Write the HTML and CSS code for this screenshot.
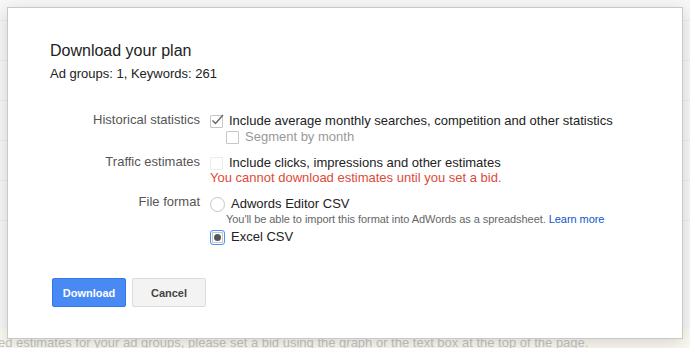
FILE: index.html
```html
<!DOCTYPE html>
<html lang="en">
  <head>
    <meta charset="UTF-8" />
    <title>Download your plan</title>
    <link rel="stylesheet" href="styles.css">
  </head>
  <body>
    <div class="page">
      <div class="page-row"></div>
      <div class="page-row"></div>
      <div class="page-row"></div>
      <div class="page-row"></div>
      <div class="page-row"></div>
      <div class="page-row"></div>
      <div class="page-note">To see detailed estimates for your ad groups, please set a bid using the graph or the text box at the top of the page.</div>
    </div>

    <div class="dialog">
      <h2 class="title">Download your plan</h2>
      <p class="summary">Ad groups: 1, Keywords: 261</p>

      <div class="form">
        <div class="label">Historical statistics</div>
        <div class="options">
          <div class="option">
            <span class="check checked">
              <svg width="15" height="15" viewBox="0 0 15 15"><polyline points="2.5,7.5 5.5,10.5 13,2" fill="none" stroke="#666" stroke-width="1.4" /></svg>
            </span>
            Include average monthly searches, competition and other statistics
          </div>
          <div class="option sub disabled">
            <span class="check"></span>
            Segment by month
          </div>
        </div>

        <div class="label">Traffic estimates</div>
        <div class="options">
          <div class="option">
            <span class="check off"></span>
            Include clicks, impressions and other estimates
          </div>
          <div class="error">You cannot download estimates until you set a bid.</div>
        </div>

        <div class="label label-file">File format</div>
        <div class="options options-file">
          <div class="option">
            <span class="radio"></span>
            Adwords Editor CSV
          </div>
          <div class="hint">You'll be able to import this format into AdWords as a spreadsheet. <a href="#">Learn more</a></div>
          <div class="option">
            <span class="radio selected"><span class="dot"></span></span>
            Excel CSV
          </div>
        </div>
      </div>

      <div class="buttons">
        <button class="btn btn-primary">Download</button>
        <button class="btn">Cancel</button>
      </div>
    </div>
  </body>
</html>
```

FILE: styles.css
```css
* {
  padding: 0;
  margin: 0;
  box-sizing: border-box;
}
body {
  font-family: "Liberation Sans", Arial, sans-serif;
  background: #f7f7f7;
  width: 690px;
  height: 348px;
  overflow: hidden;
  position: relative;
}
.page {
  height: 348px;
  padding-top: 20px;
  display: flex;
  flex-direction: column;
}
.page-row {
  height: 40px;
  border-top: 1px solid #ececec;
}
.page-note {
  margin-top: auto;
  background: #fbf9f0;
  height: 20px;
  padding-top: 7px;
  text-indent: -75px;
  white-space: nowrap;
  font-family: "Liberation Sans", Arial, sans-serif;
  font-size: 13px;
  line-height: 16px;
  color: #c4c4c4;
}

/* modal */
.dialog {
  position: absolute;
  left: 7px;
  top: 7px;
  width: 676px;
  height: 332px;
  background: #fff;
  border: 1px solid #c8c8c8;
  box-shadow: 0 4px 16px rgba(0, 0, 0, 0.15);
  padding: 33px 42px 0 42px;
}
.title {
  font-size: 16px;
  font-weight: normal;
  color: #222;
  line-height: 20px;
}
.summary {
  font-size: 13px;
  color: #222;
  line-height: 16px;
  margin-top: 5px;
}
.form {
  margin-top: 31px;
  display: grid;
  grid-template-columns: 150px auto;
  column-gap: 10px;
  row-gap: 10px;
  font-size: 13px;
  line-height: 16px;
}
.label {
  text-align: right;
  color: #555;
  line-height: 16px;
  margin-top: -1px;
}
.options-file {
  margin-top: 1px;
}
.options {
  color: #222;
}
.option {
  display: flex;
  align-items: center;
  height: 16px;
}
.option.sub {
  padding-left: 16px;
}
.disabled {
  color: #999;
}
.check {
  width: 13px;
  height: 13px;
  border: 1px solid #c6c6c6;
  border-radius: 1px;
  margin-right: 6px;
  position: relative;
  flex-shrink: 0;
}
.check.off {
  border-color: #ebebeb;
}
.check svg {
  position: absolute;
  left: -1px;
  top: -3px;
}
.error {
  color: #dd4b39;
  line-height: 14px;
}
.radio {
  width: 15px;
  height: 15px;
  border: 1px solid #c6c6c6;
  border-radius: 50%;
  margin-right: 6px;
  flex-shrink: 0;
  display: flex;
  align-items: center;
  justify-content: center;
}
.radio.selected {
  border-radius: 3px;
  border-color: #4d90fe;
  box-shadow: inset 0 0 0 1px #fff, inset 0 0 0 2px #c6c6c6;
}
.dot {
  width: 7px;
  height: 7px;
  border-radius: 50%;
  background: #555;
}
.hint {
  font-size: 11px;
  line-height: 14px;
  color: #666;
  padding-left: 16px;
  margin-bottom: 3px;
  letter-spacing: -0.06px;
}
.hint a {
  color: #15c;
  text-decoration: none;
}
.buttons {
  margin-top: 33px;
  margin-left: 2px;
  display: flex;
  gap: 6px;
}
.btn {
  font-family: "Liberation Sans", Arial, sans-serif;
  font-size: 11px;
  font-weight: bold;
  width: 74px;
  height: 29px;
  border-radius: 2px;
  border: 1px solid #dcdcdc;
  background: #f3f3f3;
  color: #444;
}
.btn-primary {
  background: #4889f3;
  border-color: #3079ed;
  color: #fff;
}
```
